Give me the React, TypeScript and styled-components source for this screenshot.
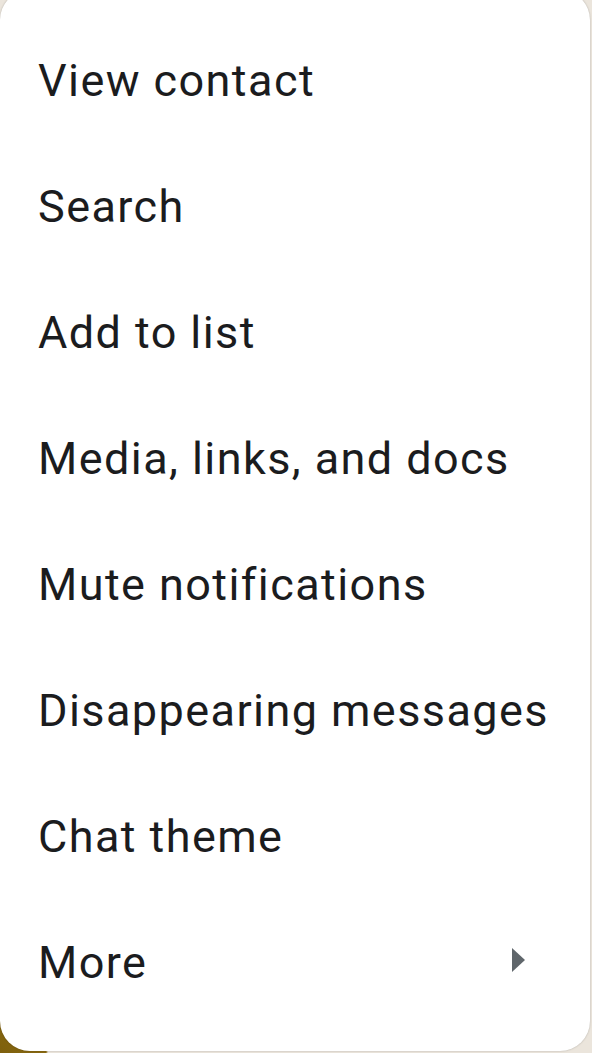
import React from "react";
import styled, { createGlobalStyle } from "styled-components";

const Global = createGlobalStyle`
  html, body { margin: 0; padding: 0; }
  body { background: #ebe5dc; font-family: Roboto, "Noto Sans", Arial, sans-serif; }
`;

const Page = styled.div`
  width: 592px;
  height: 1053px;
  overflow: hidden;
  background:
    radial-gradient(circle at 0 100%, #7e600d 0, #8a6a12 46px, rgba(235, 229, 220, 0) 48px),
    #ebe5dc;
`;

const Menu = styled.ul`
  list-style: none;
  margin: -10px 0 0 0;
  padding: 28px 0 25px 0;
  width: 590px;
  background: #ffffff;
  border-radius: 30px;
  box-shadow: 0 0 2px rgba(0, 0, 0, 0.25);
  box-sizing: border-box;
`;

const Item = styled.li`
  display: flex;
  align-items: center;
  justify-content: space-between;
  height: 126px;
  padding: 0 20px 0 38px;
  font-size: 45px;
  line-height: 126px;
  color: #1b1c1e;
  letter-spacing: 1.42px;
  white-space: nowrap;
`;

const Arrow = styled.span`
  width: 0;
  height: 0;
  border-top: 12.5px solid transparent;
  border-bottom: 12.5px solid transparent;
  border-left: 13px solid #5f666b;
  margin: -7px 45px 0 0;
`;

const items = [
  "View contact",
  "Search",
  "Add to list",
  "Media, links, and docs",
  "Mute notifications",
  "Disappearing messages",
  "Chat theme",
];

export default function App() {
  return (
    <Page>
      <Global />
      <Menu>
        {items.map((t) => (
          <Item key={t}>{t}</Item>
        ))}
        <Item>
          More
          <Arrow />
        </Item>
      </Menu>
    </Page>
  );
}
